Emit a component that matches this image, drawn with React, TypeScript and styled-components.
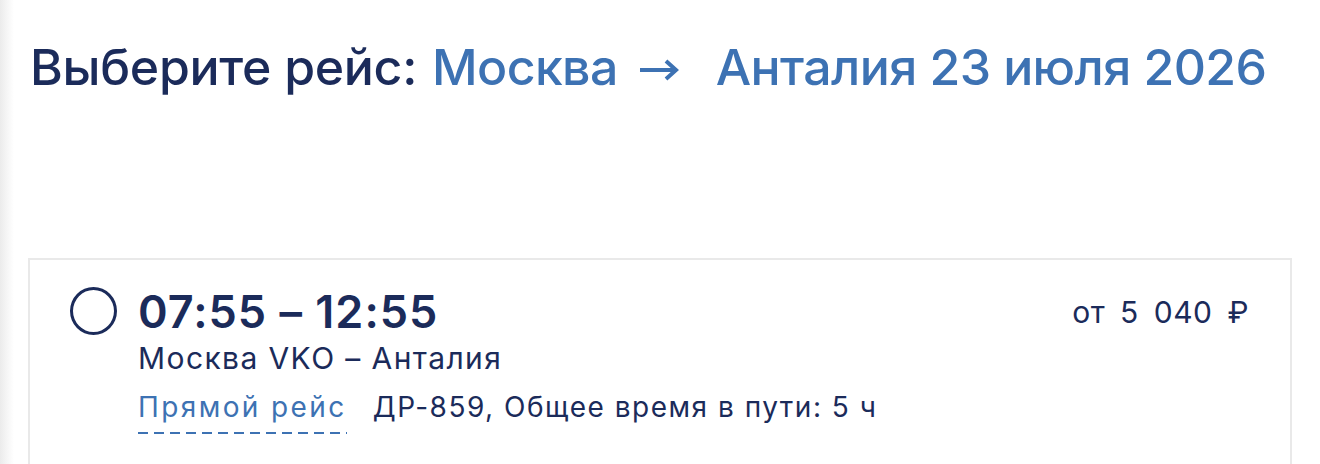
import React from "react";
import styled, { createGlobalStyle } from "styled-components";

const Global = createGlobalStyle`
  html, body { margin: 0; padding: 0; }
  body {
    background: linear-gradient(to right, #ebebeb 0px, #f4f4f4 6px, #ffffff 14px);
    font-family: Inter, "Noto Sans", sans-serif;
    color: #1b2b5a;
    min-height: 464px;
  }
`;

const Page = styled.div`
  padding: 0 28px 0 28px;
  height: 464px;
  overflow: hidden;
`;

const Title = styled.h1`
  margin: 0;
  padding: 39px 0 0 2px;
  height: 56px;
  font-size: 50px;
  font-weight: 500;
  line-height: 56px;
  letter-spacing: -0.3px;
  display: flex;
  align-items: center;
  white-space: nowrap;
`;

const Accent = styled.span<{ $gap?: number }>`
  color: #3d72b3;
  margin-left: ${(p) => p.$gap ?? 0}px;
  letter-spacing: -0.6px;
`;

const Arrow = styled.svg`
  margin: 6px 37px 0 21px;
  flex: none;
`;

const Card = styled.section`
  margin-top: 163px;
  border: 2px solid #e9e9e9;
  border-bottom: none;
  height: 220px;
  padding: 28px 41px 0 40px;
  display: grid;
  grid-template-columns: 47px 1fr auto;
  column-gap: 21px;
  align-items: start;
`;

const Radio = styled.span`
  width: 47px;
  height: 48px;
  box-sizing: border-box;
  border: 3px solid #1b2b5a;
  border-radius: 50%;
  margin-top: -1px;
`;

const Info = styled.div`
  display: flex;
  flex-direction: column;
`;

const Times = styled.div`
  font-size: 45px;
  font-weight: 600;
  line-height: 48px;
  letter-spacing: 1px;
`;

const Route = styled.div`
  font-size: 30px;
  line-height: 40px;
  font-weight: 400;
  letter-spacing: 1.4px;
  margin-top: 2px;
`;

const Details = styled.div`
  display: flex;
  align-items: flex-start;
  gap: 26px;
  font-size: 28px;
  line-height: 34px;
  margin-top: 12px;
`;

const DirectLink = styled.span`
  color: #3d72b3;
  letter-spacing: 2.4px;
  padding-bottom: 10px;
  background-image: linear-gradient(to right, #3d72b3 60%, transparent 60%);
  background-size: 16px 2px;
  background-repeat: repeat-x;
  background-position: left bottom;
`;

const Meta = styled.span`
  letter-spacing: 1.5px;
`;

const Price = styled.div`
  font-size: 30px;
  line-height: 34px;
  margin-top: 7px;
  letter-spacing: 0.5px;
  word-spacing: 6px;
  white-space: nowrap;
`;

export default function App() {
  return (
    <>
      <Global />
      <Page>
        <Title>
          Выберите рейс:
          <Accent $gap={15}>Москва</Accent>
          <Arrow width="40" height="24" viewBox="0 0 40 24" aria-hidden="true">
            <path d="M1 12 H37 M27 3 L37 12 L27 21" fill="none" stroke="#3d72b3" strokeWidth="4" />
          </Arrow>
          <Accent>Анталия 23 июля 2026</Accent>
        </Title>
        <Card>
          <Radio />
          <Info>
            <Times>07:55 – 12:55</Times>
            <Route>Москва VKO – Анталия</Route>
            <Details>
              <DirectLink>Прямой рейс</DirectLink>
              <Meta>ДР-859, Общее время в пути: 5 ч</Meta>
            </Details>
          </Info>
          <Price>от 5 040 ₽</Price>
        </Card>
      </Page>
    </>
  );
}
